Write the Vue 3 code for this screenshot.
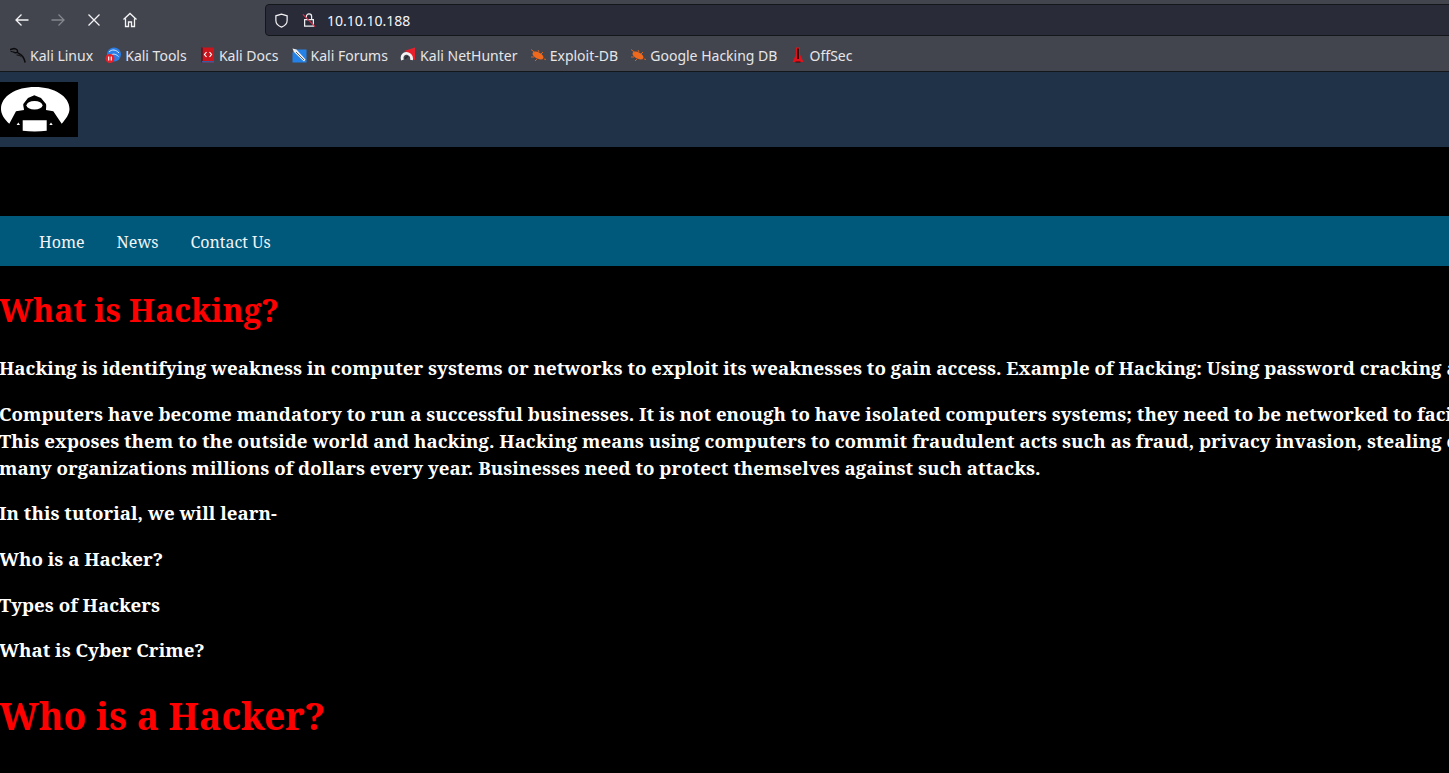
<script setup>
const bookmarks = [
  { label: 'Kali Linux', icon: 'dragon' },
  { label: 'Kali Tools', icon: 'tools' },
  { label: 'Kali Docs', icon: 'docs' },
  { label: 'Kali Forums', icon: 'forums' },
  { label: 'Kali NetHunter', icon: 'hunter' },
  { label: 'Exploit-DB', icon: 'bug' },
  { label: 'Google Hacking DB', icon: 'bug' },
  { label: 'OffSec', icon: 'offsec' }
]
const navItems = ['Home', 'News', 'Contact Us']
</script>

<template>
  <div class="page">
    <div class="toolbar">
      <div class="nav-buttons">
        <svg class="tb-icon" viewBox="0 0 16 16"><path d="M14.5 8H2M7.5 2.500 2 8l5.500 5.500" /></svg>
        <svg class="tb-icon dim" viewBox="0 0 16 16"><path d="M1.500 8H14M8.500 2.500 14 8l-5.500 5.500" /></svg>
        <svg class="tb-icon" viewBox="0 0 16 16"><path d="M2.500 2.500l11 11M13.500 2.500l-11 11" /></svg>
        <svg class="tb-icon" viewBox="0 0 16 16"><path d="M1.500 7.500 8 1.500l6.500 6M3.500 6.500v8h3v-4.500h3v4.500h3v-8" /></svg>
      </div>
      <div class="urlbar">
        <svg class="shield" viewBox="0 0 16 16"><path d="M8 1.200 2 3v5c0 3.500 2.700 5.800 6 7 3.300-1.200 6-3.500 6-7V3z" /></svg>
        <svg class="lock" viewBox="0 0 16 16">
          <path class="lock-body" d="M5 5V3.500a3 3 0 0 1 6 0V7M3 7h10v7.500H3z" />
          <path class="lock-slash" d="M1 1 15 15" />
        </svg>
        <span class="url">10.10.10.188</span>
      </div>
    </div>
    <div class="bookmarks">
      <div v-for="b in bookmarks" :key="b.label" class="bookmark">
        <svg class="fav" viewBox="0 0 16 16">
          <g v-if="b.icon === 'dragon'" fill="none" stroke="#0c0c0e" stroke-linecap="round">
            <path d="M0.500 2.500 4 1.500c2 .3 4 1.500 3.500 3.200-.4 1.300-2.500 1.300-3.500.6" stroke-width="1.400" />
            <path d="M7.500 5.500c2 1.500 4 2.300 5.500 4.500 1 1.500 1.500 3 2 5" stroke-width="1.500" />
            <path d="M1 4.500l2.500.5M7 8c1.500 0 3 .5 4 1.500" stroke-width="1" />
          </g>
          <g v-else-if="b.icon === 'tools'">
            <circle cx="9" cy="7.500" r="7" fill="#2a7de6" />
            <path d="M4 5c3-3 7-2.500 10 1M6 8c2.500-1.500 5-1 7.500 1.500" fill="none" stroke="#d8e9fc" stroke-width="1" />
            <circle cx="5" cy="11.500" r="4.500" fill="#e5202a" />
            <path d="M3.700 9.500v4M6.300 9.500v4" stroke="#fff" stroke-width="1.200" />
          </g>
          <g v-else-if="b.icon === 'docs'">
            <rect x="2" y="0.500" width="13" height="15" rx="1" fill="#cc141c" />
            <rect x="2" y="0.500" width="2" height="15" fill="#701420" />
            <rect x="3" y="14" width="12" height="1.500" fill="#3c5aa0" />
            <path d="M7.500 5 5.500 7.500l2 2.500M10.500 5l2 2.500-2 2.500" fill="none" stroke="#fff" stroke-width="1.200" />
          </g>
          <g v-else-if="b.icon === 'forums'">
            <path d="M3 2.500h12.500v13H1.500V6z" fill="#2481e8" />
            <path d="M1.500 1.500l4 1 9 10-1.500 2L3 5z" fill="#f0f0f0" />
            <path d="M5 5l8 8" stroke="#5a6068" stroke-width="1" />
          </g>
          <g v-else-if="b.icon === 'hunter'">
            <path d="M4 4 15 0.500V13l-3-1C11 7 8 5 4 4z" fill="#e8202c" />
            <path d="M2.500 13C1 9 4 5.500 7.500 6.500c3 1 4.500 3.500 4 6.500" fill="none" stroke="#f2f2f2" stroke-width="2.800" />
            <path d="M5.500 12c0-1.500 1-2.500 2.500-2.200" fill="none" stroke="#26262a" stroke-width="1.500" />
          </g>
          <g v-else-if="b.icon === 'bug'">
            <ellipse cx="8" cy="8.500" rx="6" ry="3.200" fill="#f0691c" transform="rotate(28 8 8.500)" />
            <path d="M1 2.500 5 5.500M8 3l1 2M13 5l-2 2M1 10l3 0M5 14l2-2M14 12l2 .5" stroke="#d9631f" stroke-width="1" />
          </g>
          <g v-else>
            <path d="M6 0.500h4v7l3.500 7.500h-11L6 7.500z" fill="#e2121c" />
            <path d="M8 1.500v10.500" stroke="#3a0508" stroke-width="2" />
            <path d="M5.500 15h5" stroke="#3a0508" stroke-width="1" />
          </g>
        </svg>
        <span>{{ b.label }}</span>
      </div>
    </div>

    <header class="site-header">
      <div class="logo">
        <svg viewBox="0 0 78 55" width="78" height="55">
          <path d="M9.300 41.700C4 37 1 32 1 27 1 14 16 5 35 5s34.500 9 34.500 22c0 5-3.500 10-7.800 14.700L53.300 29.300 46 28c0-2 .5-4 0-6l-5-6-6.700-2.700L28 16l-4.700 6c-.3 2 .7 4 .7 6l-8 1.300z" fill="#fff" />
          <ellipse cx="34.500" cy="23.300" rx="8" ry="4.300" fill="#fff" />
          <path d="M22.700 38.300h24v10.500c-8 .8-16 .8-24 0z" fill="#fff" />
          <path d="M18.300 40.500l1.700 2.500h-3.400zM51 40.500l1.700 2.500h-3.400z" fill="#fff" />
        </svg>
      </div>
    </header>

    <div class="spacer"></div>

    <nav class="site-nav">
      <a v-for="n in navItems" :key="n">{{ n }}</a>
    </nav>

    <main class="content">
      <h1>What is Hacking?</h1>
      <p class="first">Hacking is identifying weakness in computer systems or networks to exploit its weaknesses to gain access. Example of Hacking: Using password cracking algorithm to gain access to a system.</p>
      <p>Computers have become mandatory to run a successful businesses. It is not enough to have isolated computers systems; they need to be networked to facilitate communication with external businesses.<br>This exposes them to the outside world and hacking. Hacking means using computers to commit fraudulent acts such as fraud, privacy invasion, stealing corporate/personal data, etc. Cyber crimes cost<br>many organizations millions of dollars every year. Businesses need to protect themselves against such attacks.</p>
      <p>In this tutorial, we will learn-</p>
      <p>Who is a Hacker?</p>
      <p>Types of Hackers</p>
      <p>What is Cyber Crime?</p>
      <h1 class="big">Who is a Hacker?</h1>
    </main>
  </div>
</template>

<style>
html, body {
  margin: 0;
  height: 100%;
  overflow: hidden;
  background: #000;
}
</style>

<style scoped>
.page {
  height: 773px;
  overflow: hidden;
  background: #000;
  font-family: "Noto Serif", "DejaVu Serif", serif;
}

.toolbar {
  height: 36px;
  box-sizing: border-box;
  background: #42454e;
  display: flex;
  align-items: center;
  padding-top: 4px;
}

.nav-buttons {
  display: flex;
  align-items: center;
  gap: 20px;
  padding-left: 14px;
  width: 251px;
}

.tb-icon {
  width: 16px;
  height: 16px;
  fill: none;
  stroke: #f4f4f6;
  stroke-width: 1.300;
  flex: none;
}

.tb-icon.dim {
  stroke: #85878d;
}

.urlbar {
  flex: 1;
  height: 32px;
  box-sizing: border-box;
  margin-right: -10px;
  background: #2a2b38;
  border: 1px solid #15161a;
  border-radius: 4px;
  display: flex;
  align-items: center;
  color: #f5f5f7;
  font-family: "Noto Sans", sans-serif;
  font-size: 14px;
}

.shield {
  width: 15px;
  height: 15px;
  margin-left: 8px;
  fill: none;
  stroke: #f0f0f3;
  stroke-width: 1.300;
}

.lock {
  width: 14px;
  height: 15px;
  margin-left: 13px;
  fill: none;
}

.lock-body {
  stroke: #f0f0f3;
  stroke-width: 1.400;
}

.lock-slash {
  stroke: #e0304a;
  stroke-width: 1.300;
}

.url {
  margin-left: 11px;
}

.bookmarks {
  height: 36px;
  box-sizing: border-box;
  padding-top: 3px;
  background: #42454e;
  border-bottom: 1px solid #15161a;
  display: flex;
  align-items: center;
  padding-left: 10px;
  gap: 12.200px;
  color: #e6e6e8;
  font-family: "Noto Sans", sans-serif;
  font-size: 14px;
}

.bookmark {
  display: flex;
  align-items: center;
  gap: 4px;
}

.fav {
  width: 16px;
  height: 16px;
  flex: none;
}

.site-header {
  height: 75px;
  background: #203247;
  padding-top: 10px;
  box-sizing: border-box;
}

.logo {
  width: 78px;
  height: 55px;
  background: #000;
}

.logo svg {
  display: block;
}

.spacer {
  height: 69px;
}

.site-nav {
  height: 50px;
  box-sizing: border-box;
  padding-top: 2px;
  background: #00587b;
  display: flex;
  align-items: center;
  padding-left: 39px;
  gap: 32px;
  color: #f0f4f6;
  font-size: 16px;
}

.content {
  color: #fff;
  width: 2100px;
  margin-left: -1px;
}

h1 {
  color: #f00;
  font-size: 31.800px;
  font-weight: 700;
  line-height: 44px;
  margin: 22px 0 0;
}

h1.big {
  font-size: 37.200px;
  margin-top: 30.500px;
}

p {
  margin: 18.650px 0 0;
  font-size: 18.720px;
  font-weight: 700;
  line-height: 27px;
}

p.first {
  margin-top: 22px;
}
</style>
